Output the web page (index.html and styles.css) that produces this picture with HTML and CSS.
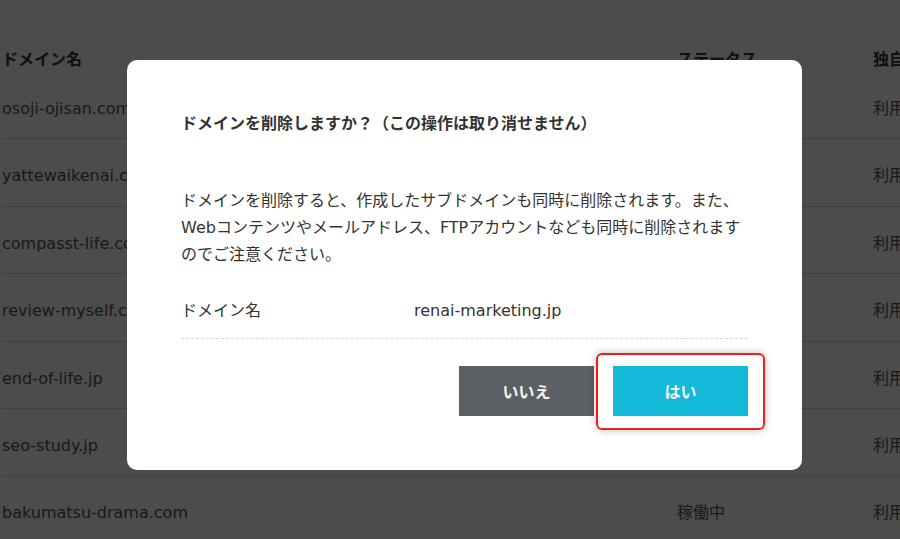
FILE: index.html
```html
<!DOCTYPE html>
<html lang="ja">
<head>
  <meta charset="UTF-8" />
  <meta name="viewport" content="width=device-width, initial-scale=1.0"/>
  <title>ドメイン一覧</title>
  <link rel="stylesheet" href="styles.css">
</head>
<body>

  <!-- Domain list (behind the dialog) -->
  <div class="domain-table">
    <div class="table-head">
      <div>ドメイン名</div>
      <div>ステータス</div>
      <div>独自SSL</div>
    </div>
    <div class="table-row"><div>osoji-ojisan.com</div><div>稼働中</div><div>利用中</div></div>
    <div class="table-row"><div>yattewaikenai.com</div><div>稼働中</div><div>利用中</div></div>
    <div class="table-row"><div>compasst-life.com</div><div>稼働中</div><div>利用中</div></div>
    <div class="table-row"><div>review-myself.com</div><div>稼働中</div><div>利用中</div></div>
    <div class="table-row"><div>end-of-life.jp</div><div>稼働中</div><div>利用中</div></div>
    <div class="table-row"><div>seo-study.jp</div><div>稼働中</div><div>利用中</div></div>
    <div class="table-row"><div>bakumatsu-drama.com</div><div>稼働中</div><div>利用中</div></div>
  </div>

  <!-- Delete confirmation -->
  <div class="overlay">
    <div class="modal">
      <h2 class="modal-title">ドメインを削除しますか？（この操作は取り消せません）</h2>
      <p class="modal-text">ドメインを削除すると、作成したサブドメインも同時に削除されます。また、Webコンテンツやメールアドレス、FTPアカウントなども同時に削除されますのでご注意ください。</p>
      <div class="detail-row">
        <span class="detail-label">ドメイン名</span>
        <span class="detail-value">renai-marketing.jp</span>
      </div>
      <div class="modal-buttons">
        <button class="btn btn-cancel">いいえ</button>
        <button class="btn btn-ok">はい<span class="highlight"></span></button>
      </div>
    </div>
  </div>

</body>
</html>
```

FILE: styles.css
```css
:root {
  --text-dark: #333333;
  --line: #d2d2d2;
  --cancel: #5a6064;
  --accent: #14b8d8;
  --mark: #f21c1c;
}

* {
  box-sizing: border-box;
  margin: 0;
  padding: 0;
}

body {
  font-family: 'DejaVu Sans', 'Noto Sans CJK JP', sans-serif;
  font-size: 16px;
  line-height: 27px;
  color: var(--text-dark);
  background-color: #ffffff;
  width: 900px;
  height: 539px;
  overflow: hidden;
  position: relative;
}

/* table underneath */
.domain-table {
  width: 1100px;
  padding-left: 2px;
  color: #555555;
}

.table-head,
.table-row {
  display: grid;
  grid-template-columns: 675px 196px 1fr;
}

.table-head {
  height: 72px;
  padding-top: 46px;
  font-weight: 700;
  color: #333333;
}

.table-row {
  height: 67.4px;
  padding-top: 23px;
  border-bottom: 1px solid var(--line);
}

/* dialog */
.overlay {
  position: absolute;
  inset: 0;
  background-color: rgba(0, 0, 0, 0.7);
}

.modal {
  position: absolute;
  left: 127px;
  top: 60px;
  width: 675px;
  background-color: #ffffff;
  border-radius: 10px;
  padding: 50px 54px 54px;
}

.modal-title {
  font-size: 16px;
  font-weight: 700;
  line-height: 27px;
}

.modal-text {
  margin-top: 50px;
}

.detail-row {
  display: flex;
  margin-top: 29px;
  padding-bottom: 14px;
  border-bottom: 1px dashed #d8d8d8;
}

.detail-label {
  width: 233px;
}

.modal-buttons {
  display: flex;
  justify-content: flex-end;
  gap: 19px;
  margin-top: 27px;
}

.btn {
  position: relative;
  width: 135px;
  height: 50px;
  border: none;
  font-family: inherit;
  font-size: 16px;
  font-weight: 700;
  color: #f4f4f4;
  cursor: pointer;
}

.btn-cancel {
  background-color: var(--cancel);
}

.btn-ok {
  background-color: var(--accent);
}

.highlight {
  position: absolute;
  top: -13px;
  left: -17px;
  right: -17px;
  bottom: -14px;
  border: 2px solid var(--mark);
  border-radius: 6px;
  box-shadow: 0 0 8px rgba(0, 0, 0, 0.25);
  pointer-events: none;
}
```
